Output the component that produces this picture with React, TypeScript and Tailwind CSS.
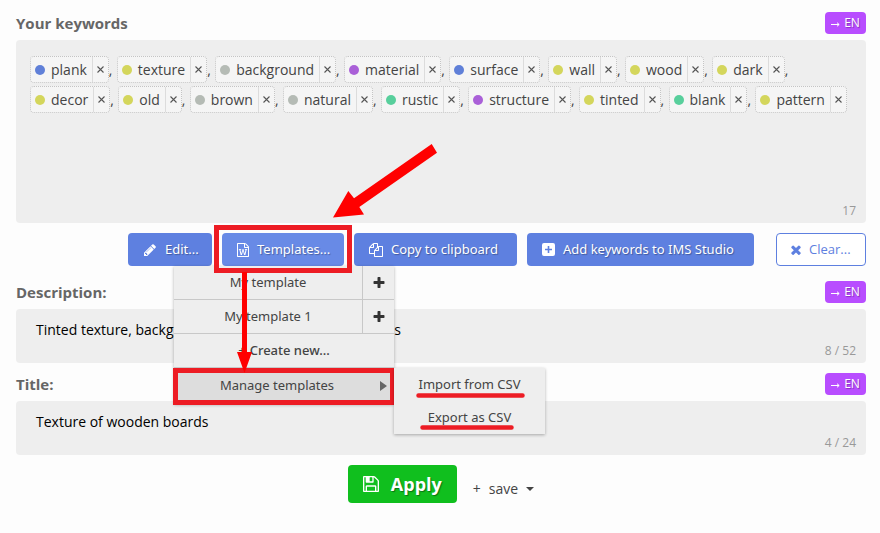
import React from "react";

type IconProps = { d: string; viewBox?: string; className?: string };

const Icon = ({ d, viewBox = "0 0 1792 1792", className = "" }: IconProps) => (
  <svg viewBox={viewBox} className={`shrink-0 fill-current ${className}`} aria-hidden="true">
    <path d={d} fillRule="evenodd" />
  </svg>
);

const PENCIL =
  "M491 1536l91-91-235-235-91 91v107h128v128h107zm523-928q0-22-22-22-10 0-17 7l-542 542q-7 7-7 17 0 22 22 22 10 0 17-7l542-542q7-7 7-17zm-54-192l416 416-832 832h-416v-416zm683 96q0 53-37 90l-166 166-416-416 166-165q36-38 90-38 53 0 91 38l235 234q37 39 37 91z";
const FILE_WORD =
  "M1596 380q28 28 48 76t20 88v1152q0 40-28 68t-68 28h-1344q-40 0-68-28t-28-68v-1600q0-40 28-68t68-28h896q40 0 88 20t76 48zm-444-244v376h376q-10-29-22-41l-313-313q-12-12-41-22zm384 1528v-1024h-416q-40 0-68-28t-28-68v-416h-768v1536h1280zm-1175-896v107h70l164 661h159l128-485q7-20 10-46 2-16 2-24h4l3 24q1 3 3.5 20t5.5 26l128 485h159l164-661h70v-107h-300v107h90l-99 438q-5 20-7 46l-2 21h-4l-3-21q-1-5-4-21t-5-25l-144-545h-114l-144 545q-2 9-4.5 24.5t-3.5 21.5l-4 21h-4l-2-21q-2-26-7-46l-99-438h90v-107h-300z";
const COPY =
  "M1696 384q40 0 68 28t28 68v1216q0 40-28 68t-68 28h-960q-40 0-68-28t-28-68v-288h-544q-40 0-68-28t-28-68v-672q0-40 20-88t48-76l408-408q28-28 76-48t88-20h416q40 0 68 28t28 68v328q68-40 128-40h416zm-544 213l-299 299h299v-299zm-640-384l-299 299h299v-299zm196 647l316-316v-416h-384v416q0 40-28 68t-68 28h-416v640h512v-256q0-40 20-88t48-76zm956 804v-1152h-384v416q0 40-28 68t-68 28h-416v640h896z";
const PLUS_SQUARE =
  "M2 0h9a2 2 0 0 1 2 2v9a2 2 0 0 1-2 2h-9a2 2 0 0 1-2-2v-9a2 2 0 0 1 2-2zM5.7 3v2.7h-2.7v1.6h2.7v2.7h1.6v-2.7h2.7v-1.6h-2.7v-2.7z";
const TIMES =
  "M1490 1322q0 40-28 68l-136 136q-28 28-68 28t-68-28l-294-294-294 294q-28 28-68 28t-68-28l-136-136q-28-28-28-68t28-68l294-294-294-294q-28-28-28-68t28-68l136-136q28-28 68-28t68 28l294 294 294-294q28-28 68-28t68 28l136 136q28 28 28 68t-28 68l-294 294 294 294q28 28 28 68z";
const PLUS =
  "M1600 736v192q0 40-28 68t-68 28h-416v416q0 40-28 68t-68 28h-192q-40 0-68-28t-28-68v-416h-416q-40 0-68-28t-28-68v-192q0-40 28-68t68-28h416v-416q0-40 28-68t68-28h192q40 0 68 28t28 68v416h416q40 0 68 28t28 68z";
const FLOPPY =
  "M384 1536h768v-384h-768v384zm896 0h128v-896q0-14-10-38.5t-20-34.5l-281-281q-10-10-34-20t-39-10v416q0 40-28 68t-68 28h-576q-40 0-68-28t-28-68v-416h-128v1280h128v-416q0-40 28-68t68-28h832q40 0 68 28t28 68v416zm-384-928v-320q0-13-9.5-22.5t-22.5-9.5h-192q-13 0-22.5 9.5t-9.5 22.5v320q0 13 9.5 22.5t22.5 9.5h192q13 0 22.5-9.5t9.5-22.5zm640 32v928q0 40-28 68t-68 28h-1344q-40 0-68-28t-28-68v-1344q0-40 28-68t68-28h928q40 0 88 20t76 48l280 280q28 28 48 76t20 88z";

const BLUE = "bg-[#6080d8]";
const LIME = "bg-[#d4d65c]";
const GRAY = "bg-[#b5bbb5]";
const VIOLET = "bg-[#aa60d8]";
const GREEN = "bg-[#58cf9c]";

const keywords: [string, string][] = [
  ["plank", BLUE],
  ["texture", LIME],
  ["background", GRAY],
  ["material", VIOLET],
  ["surface", BLUE],
  ["wall", LIME],
  ["wood", LIME],
  ["dark", LIME],
  ["decor", LIME],
  ["old", LIME],
  ["brown", GRAY],
  ["natural", GRAY],
  ["rustic", GREEN],
  ["structure", VIOLET],
  ["tinted", LIME],
  ["blank", GREEN],
  ["pattern", LIME],
];

const Keyword = ({ word, color, last }: { word: string; color: string; last: boolean }) => (
  <li className="flex h-[27px] items-stretch">
    <span className="flex items-stretch rounded border border-dotted border-[#c4c4c4] bg-[#f5f5f5]">
      <span className="flex items-center gap-1.5 pr-[5px] pl-1">
        <i className={`size-[10px] rounded-full ${color}`} />
        <span>{word}</span>
      </span>
      <button
        type="button"
        aria-label={`Remove ${word}`}
        className="flex w-4 items-center justify-center border-l border-[#dcdcdc] text-[#555]"
      >
        <svg viewBox="0 0 7 7" className="size-[7px] stroke-current" aria-hidden="true">
          <path d="M.5 .5L6.5 6.5M6.5 .5L.5 6.5" strokeWidth="1.1" />
        </svg>
      </button>
    </span>
    <span className="w-2 pt-1">{last ? "" : ","}</span>
  </li>
);

const Translate = () => (
  <button
    type="button"
    className="flex h-[22px] w-[41px] items-center justify-center gap-1 rounded bg-[#b84dff] text-xs text-white [text-shadow:1px_1px_1px_rgba(0,0,0,0.3)]"
  >
    <svg viewBox="0 0 9 5" className="mt-0.5 h-[5px] w-[9px] fill-none stroke-current" aria-hidden="true">
      <path d="M0 2.5H8M6 .7L8.2 2.5L6 4.3" />
    </svg>
    EN
  </button>
);

const Heading = ({ children }: { children: React.ReactNode }) => (
  <div className="mb-1.5 flex items-center justify-between text-[15px] leading-[22px] font-bold text-[#666]">
    {children}
    <div className="font-normal">
      <Translate />
    </div>
  </div>
);

const ActionButton = ({ children, className = "" }: { children: React.ReactNode; className?: string }) => (
  <button
    type="button"
    className={`flex h-[33px] items-center gap-2 rounded px-[15px] font-['Noto_Sans',sans-serif] text-[13px] whitespace-nowrap text-white [text-shadow:1px_1px_1px_rgba(0,0,0,0.3)] ${className}`}
  >
    {children}
  </button>
);

const Field = ({ id, label, value, count }: { id: string; label: string; value: string; count: string }) => (
  <section className="mb-2.5">
    <Heading>
      <label htmlFor={id}>{label}</label>
    </Heading>
    <div className="flex h-[54px] items-end rounded bg-[#eee]">
      <textarea
        id={id}
        defaultValue={value}
        className="h-full min-w-0 flex-1 resize-none overflow-hidden bg-transparent pt-[11px] pl-5 text-sm text-black outline-none"
      />
      <span className="pr-2.5 pb-1 text-xs text-[#999]">{count}</span>
    </div>
  </section>
);

const TemplateRow = ({ name }: { name: string }) => (
  <div className="flex h-[34px] border-b border-[#c8c8c8]">
    <button type="button" className="flex-1">
      {name}
    </button>
    <button
      type="button"
      aria-label={`Save to ${name}`}
      className="flex w-8 items-center justify-center border-l border-[#c8c8c8] text-[#333]"
    >
      <Icon d={PLUS} className="size-[14px]" />
    </button>
  </div>
);

const TemplatesMenu = () => (
  <div className="absolute top-full -left-12 z-10 w-[220px] bg-[#eee] font-['Noto_Sans',sans-serif] text-[13px] text-[#444] shadow-[0_1px_3px_rgba(0,0,0,0.3)]">
    <TemplateRow name="My template" />
    <TemplateRow name="My template 1" />
    <button type="button" className="flex h-[34px] w-full items-center justify-center gap-1 border-b border-[#c8c8c8]">
      <span>+</span>
      <span className="font-medium">Create new...</span>
    </button>
    <div className="relative">
      <button type="button" className="flex h-9 w-full items-center bg-[#ddd] pr-[7px]">
        <span className="flex-1">Manage templates</span>
        <svg viewBox="0 0 7 10" className="h-[10px] w-[7px] fill-[#666]" aria-hidden="true">
          <path d="M0 0L7 5L0 10z" />
        </svg>
      </button>
      <div className="pointer-events-none absolute -inset-px top-0 border-5 border-[#ed1c24]" />
      <div className="absolute top-0 left-full w-[151px] bg-[#eee] shadow-[0_1px_3px_rgba(0,0,0,0.3)]">
        <button type="button" className="h-[33px] w-full">
          Import from CSV
        </button>
        <button type="button" className="h-[33px] w-full">
          Export as CSV
        </button>
        <svg className="pointer-events-none absolute inset-0 size-full" aria-hidden="true">
          <path
            d="M24.5 27.5H128.5M28.5 59.5H117.5"
            fill="none"
            stroke="#ed1c24"
            strokeWidth="4.5"
            strokeLinecap="round"
          />
        </svg>
      </div>
    </div>
  </div>
);

const Pointers = () => (
  <>
    <div className="pointer-events-none absolute -inset-2 -bottom-[7px] z-20 border-5 border-[#ed1c24]" />
    <svg
      viewBox="0 0 220 230"
      className="pointer-events-none absolute -top-[90px] left-0 z-20 h-[230px] w-[220px] fill-[#f00]"
      aria-hidden="true"
    >
      <path d="M209.7 1L215 9.7L137.3 64L142 71.6L111 74.5L126.3 48L132 55.3z" />
      <path d="M20 129h5v80h5l-7.5 21l-7.5-21h5z" />
    </svg>
  </>
);

export default function App() {
  return (
    <main className="min-h-screen bg-[#fdfdfd] pt-3 pr-3.5 pl-4 font-['Open_Sans','Noto_Sans',sans-serif] text-[#444]">
      <section>
        <Heading>
          <h2>Your keywords</h2>
        </Heading>
        <div className="flex h-[183px] flex-col justify-between rounded bg-[#eee] pt-4 pr-2.5 pb-1 pl-3.5">
          <ul className="flex flex-wrap gap-y-[3px] text-sm">
            {keywords.map(([word, color], i) => (
              <Keyword key={word} word={word} color={color} last={i === keywords.length - 1} />
            ))}
          </ul>
          <span className="self-end text-xs text-[#999]">17</span>
        </div>
      </section>

      <div className="mt-2.5 mb-[15px] flex justify-end gap-2.5">
        <ActionButton className="w-[84px] bg-[#5e80e0]">
          <Icon d={PENCIL} className="size-[14px]" />
          Edit...
        </ActionButton>
        <div className="relative">
          <ActionButton className="w-[122px] bg-[#688ae6]">
            <Icon d={FILE_WORD} viewBox="128 0 1536 1792" className="h-[14px] w-3" />
            Templates...
          </ActionButton>
          <TemplatesMenu />
          <Pointers />
        </div>
        <ActionButton className="w-[163px] bg-[#5e80e0]">
          <Icon d={COPY} className="size-[14px]" />
          Copy to clipboard
        </ActionButton>
        <ActionButton className="w-[227px] bg-[#5e80e0]">
          <Icon d={PLUS_SQUARE} viewBox="0 0 13 13" className="size-[13px]" />
          Add keywords to IMS Studio
        </ActionButton>
        <button
          type="button"
          className="ml-3 flex h-[33px] w-[90px] items-center gap-2 rounded border border-[#5e80e0] bg-white px-3.5 text-[13px] text-[#5e80e0]"
        >
          <Icon d={TIMES} viewBox="302 302 1188 1252" className="size-[10px]" />
          Clear...
        </button>
      </div>

      <Field
        id="description"
        label="Description:"
        value="Tinted texture, background made of old wooden boards"
        count="8 / 52"
      />
      <Field id="title" label="Title:" value="Texture of wooden boards" count="4 / 24" />

      <div className="flex items-start justify-center gap-4">
        <button
          type="button"
          className="flex h-[38px] items-center rounded bg-[#10bf1e] px-[15px] text-lg font-bold text-white [text-shadow:1px_1px_1px_rgba(0,0,0,0.4)]"
        >
          <Icon d={FLOPPY} viewBox="0 128 1536 1536" className="mr-3 size-4" />
          Apply
        </button>
        <button type="button" className="mt-3.5 flex items-center gap-2 text-sm">
          <span>+</span>
          <span>save</span>
          <svg viewBox="0 0 8 4" className="h-1 w-2 fill-current" aria-hidden="true">
            <path d="M0 0H8L4 4z" />
          </svg>
        </button>
      </div>
    </main>
  );
}
